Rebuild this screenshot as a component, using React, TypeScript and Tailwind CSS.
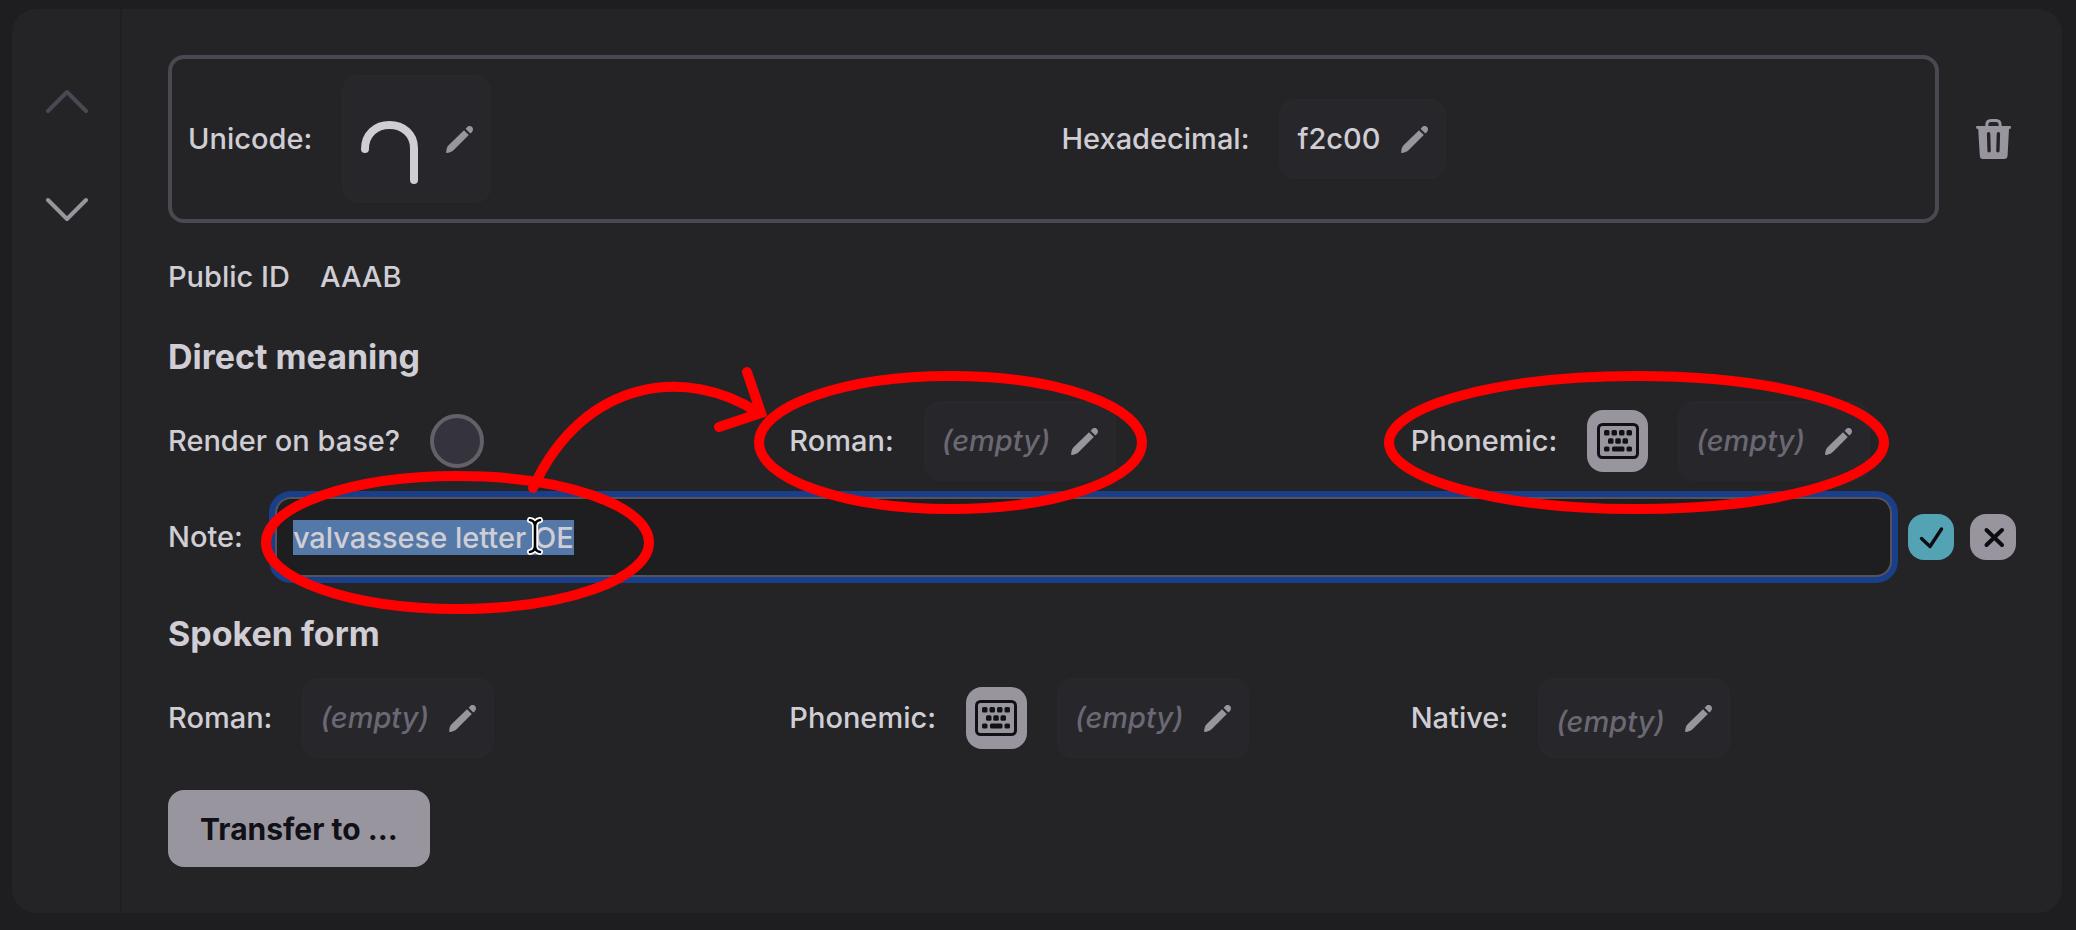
import React, { useEffect, useRef, useState } from 'react';

const PencilIcon = () => (
  <svg width="27" height="27" viewBox="0 0 27 27" fill="#98959f" aria-hidden="true">
    <path d="M0.2 26.9 C0 24 1 20.800 2.800 19 L18 4.200 L22.800 9 L7.800 24 C6 25.800 3 27 0.2 26.900 Z" />
    <path d="M19.600 2.800 L20.800 1.400 C22.400 -0.4 25 -0.2 26.200 1.300 C27.400 2.800 27.200 4.800 25.700 6.200 L24.300 7.500 Z" />
  </svg>
);

const TrashIcon = () => (
  <svg width="35" height="40" viewBox="0 0 35 40" aria-hidden="true">
    <path
      d="M10.8 8 V6 Q10.8 1.5 15 1.5 H20 Q24.2 1.5 24.2 6 V8"
      fill="none"
      stroke="#98959f"
      strokeWidth="3"
    />
    <path
      d="M1.2 7 H33.8 Q35 7 35 8.4 Q35 10 33 10 L31.6 36.5 Q31.4 40 28 40 H7 Q4 40 3.8 36.5 L2.2 10 Q0 10 0 8.4 Q0 7 1.2 7 Z"
      fill="#98959f"
    />
    <path d="M12.6 14.8 L13.1 31.8 M22.4 14.8 L21.9 31.8" stroke="#242427" strokeWidth="3.4" strokeLinecap="round" />
  </svg>
);

const KeyboardIcon = () => (
  <svg width="42" height="36" viewBox="0 0 42 36" fill="#111016" aria-hidden="true">
    <rect x="1.5" y="1.5" width="39" height="33" rx="4" fill="none" stroke="#111016" strokeWidth="3" />
    <rect x="7" y="7" width="5.5" height="5.5" rx="1.5" />
    <rect x="14.5" y="7" width="5.5" height="5.5" rx="1.5" />
    <rect x="22" y="7" width="5.5" height="5.5" rx="1.5" />
    <rect x="29.5" y="7" width="5.5" height="5.5" rx="1.5" />
    <rect x="11" y="15.3" width="5.5" height="5.5" rx="1.5" />
    <rect x="18.3" y="15.3" width="5.5" height="5.5" rx="1.5" />
    <rect x="25.5" y="15.3" width="5.5" height="5.5" rx="1.5" />
    <rect x="7" y="23.5" width="5.5" height="5" rx="1.5" />
    <rect x="15" y="23.5" width="12.5" height="5" rx="1.5" />
    <rect x="29.5" y="23.5" width="5.5" height="5" rx="1.5" />
  </svg>
);

interface EditChipProps {
  label: string;
  children: React.ReactNode;
}

const EditChip: React.FC<EditChipProps> = ({ label, children }) => (
  <button
    type="button"
    aria-label={`Edit ${label}`}
    className="flex min-h-20 items-center gap-5 rounded-2xl border-2 border-[#28282b] bg-[#27262b] px-4"
  >
    {children}
    <PencilIcon />
  </button>
);

const Empty = () => <em className="text-[#6b6873]">(empty)</em>;

interface FieldProps {
  label: string;
  keyboard?: boolean;
  children?: React.ReactNode;
}

const Field: React.FC<FieldProps> = ({ label, keyboard, children }) => (
  <div className="flex items-center gap-[30px]">
    <span>{label}:</span>
    {keyboard && (
      <button
        type="button"
        aria-label="Open keyboard"
        className="flex h-[62px] w-[61px] items-center justify-center rounded-2xl bg-[#98959f]"
      >
        <KeyboardIcon />
      </button>
    )}
    <EditChip label={label}>{children ?? <Empty />}</EditChip>
  </div>
);

// Hand-drawn markers shown above the form
const Annotations = () => (
  <svg
    className="pointer-events-none absolute top-0 left-0"
    width="2076"
    height="930"
    viewBox="0 0 2076 930"
    fill="none"
    stroke="#ff0000"
    strokeWidth="10"
    strokeLinecap="round"
    aria-hidden="true"
  >
    <ellipse cx="457.5" cy="542.5" rx="191.500" ry="66.500" />
    <ellipse cx="950.5" cy="442.5" rx="191.500" ry="66.500" />
    <ellipse cx="1636.5" cy="442.5" rx="247.500" ry="66.500" />
    <path d="M533 488 C585 375 690 368 757 412" />
    <path d="M747 372 L761 413 L719 427" />
    <g strokeLinejoin="round">
      <path d="M530 520 Q535 521 535 526 V546 Q535 551 530 552 M540 520 Q535 521 535 526 M535 546 Q535 551 540 552" stroke="#ffffff" strokeWidth="6" />
      <path d="M530 520 Q535 521 535 526 V546 Q535 551 530 552 M540 520 Q535 521 535 526 M535 546 Q535 551 540 552" stroke="#000000" strokeWidth="2.6" />
    </g>
  </svg>
);

const App: React.FC = () => {
  const [note, setNote] = useState('valvassese letter OE');
  const noteRef = useRef<HTMLInputElement>(null);

  useEffect(() => {
    noteRef.current?.focus();
    noteRef.current?.select();
  }, []);

  return (
    <div className="relative min-h-screen overflow-hidden bg-[#1e1e21] pt-[9px] pr-3.5 pb-4 pl-3 font-['Inter',sans-serif] text-[29px] leading-10 font-medium text-[#d0ced4]">
      <main className="flex rounded-[24px] bg-[#242427]">
        <nav className="flex w-[110px] shrink-0 flex-col items-center gap-[83px] border-r-2 border-[#1f1f22] pt-20 pl-0.5">
          <button type="button" aria-label="Move up" disabled>
            <svg width="42" height="25" viewBox="0 0 42 25" fill="none" stroke="#4a4850" strokeWidth="4" strokeLinecap="round" strokeLinejoin="round">
              <path d="M2 22 L21 3 L40 22" />
            </svg>
          </button>
          <button type="button" aria-label="Move down">
            <svg width="42" height="25" viewBox="0 0 42 25" fill="none" stroke="#98959f" strokeWidth="4" strokeLinecap="round" strokeLinejoin="round">
              <path d="M2 3 L21 22 L40 3" />
            </svg>
          </button>
        </nav>

        <div className="min-w-0 grow p-[46px]">
          <div className="flex items-center">
            <div className="grid grow grid-cols-2 items-center gap-4 rounded-2xl border-4 border-[#4a4850] p-4">
              <Field label="Unicode">
                <svg width="66" height="124" viewBox="0 0 66 124" fill="none" stroke="#d0ced4" strokeWidth="8" strokeLinecap="round">
                  <path d="M5 72 C5 57 16 48 29.500 48 C43 48 54 57 54 71 V103" />
                </svg>
              </Field>
              <Field label="Hexadecimal">
                <span>f2c00</span>
              </Field>
            </div>
            <button type="button" aria-label="Delete" className="flex w-[77px] shrink-0 justify-center pl-8">
              <TrashIcon />
            </button>
          </div>

          <div className="mt-[34px] flex gap-[30px]">
            <span>Public ID</span>
            <span>AAAB</span>
          </div>

          <h2 className="mt-10 text-[34px] font-bold">Direct meaning</h2>
          <div className="mt-6 grid grid-cols-3 items-center gap-4">
            <div className="flex items-center gap-[30px]">
              <label htmlFor="render-on-base">Render on base?</label>
              <input
                id="render-on-base"
                type="checkbox"
                className="size-[54px] appearance-none rounded-full border-4 border-[#63606a] bg-[#35343d]"
              />
            </div>
            <Field label="Roman" />
            <Field label="Phonemic" keyboard />
          </div>

          <div className="mt-4 flex items-center gap-4">
            <label htmlFor="note" className="mr-4">Note:</label>
            <input
              id="note"
              ref={noteRef}
              type="text"
              value={note}
              onChange={(e) => setNote(e.target.value)}
              className="h-20 min-w-0 grow rounded-2xl border-2 border-[#55525c] bg-[#1e1e20] px-4 ring-6 ring-[#1a3f8a] outline-none selection:bg-[#5479a8] selection:text-[#d0ced4]"
            />
            <button type="button" aria-label="Save note" className="size-[46px] shrink-0 rounded-2xl bg-[#53a3b5]">
              <svg width="46" height="46" viewBox="0 0 46 46" fill="none" stroke="#0c0c12" strokeWidth="3.4" strokeLinecap="round" strokeLinejoin="round">
                <path d="M13.500 24.500 L22 32.500 L33.500 15" />
              </svg>
            </button>
            <button type="button" aria-label="Cancel" className="size-[46px] shrink-0 rounded-2xl bg-[#98959f]">
              <svg width="46" height="46" viewBox="0 0 46 46" fill="none" stroke="#0c0c12" strokeWidth="4" strokeLinecap="round">
                <path d="M16.500 16 L32 31 M32 16 L16.500 31" />
              </svg>
            </button>
          </div>

          <h2 className="mt-[37px] text-[34px] font-bold">Spoken form</h2>
          <div className="mt-6 grid grid-cols-3 items-center gap-4">
            <Field label="Roman" />
            <Field label="Phonemic" keyboard />
            <Field label="Native">
              <span className="pt-2"><Empty /></span>
            </Field>
          </div>

          <button type="button" className="mt-8 h-[77px] rounded-2xl bg-[#98959f] px-8 text-[30px] font-bold text-[#111016]">
            Transfer to ...
          </button>
        </div>
      </main>
      <Annotations />
    </div>
  );
};

export default App;
